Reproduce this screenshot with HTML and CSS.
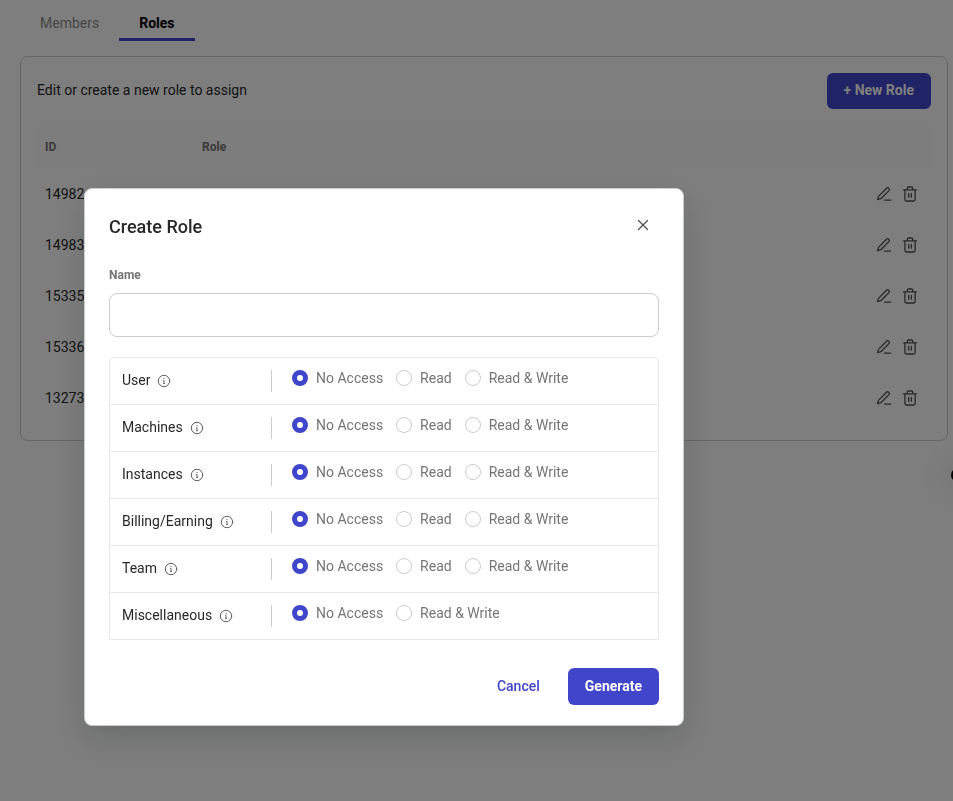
FILE: index.html
```html
<!DOCTYPE html>
<html lang="en">
<head>
  <meta charset="UTF-8" />
  <meta name="viewport" content="width=device-width, initial-scale=1.0" />
  <title>Roles</title>
  <link rel="stylesheet" href="styles.css">
</head>
<body>
  <!-- shared icons -->
  <svg class="sprite" aria-hidden="true">
    <symbol id="icon-edit" viewBox="0 0 16 16">
      <path d="M1.500 13.700l1-3.300 8-8.200a1.500 1.500 0 0 1 2.200 0l.2.2a1.500 1.500 0 0 1 0 2.200L4.900 12.700zM8.600 14.200h6" />
    </symbol>
    <symbol id="icon-trash" viewBox="0 0 16 16">
      <path d="M1.500 3.800h13M5.300 3.500V2.200C5.300 1.400 5.700 1 6.400 1h3.200c.7 0 1.100.4 1.100 1.200v1.300M2.900 3.800v9.700c0 1 .6 1.500 1.500 1.500h7.200c.9 0 1.500-.5 1.500-1.500V3.800M6.700 7.500v3.700M9.300 7.500v3.700" />
    </symbol>
    <symbol id="icon-info" viewBox="0 0 14 14">
      <circle cx="7" cy="7" r="5.700" />
      <path d="M6.600 6.500H7v3M6.600 9.600h.9M7 4.400v.4" />
    </symbol>
  </svg>

  <main class="page">
    <nav class="tabs">
      <a class="tab" href="#members">Members</a>
      <a class="tab active" href="#roles">Roles</a>
    </nav>

    <section class="card">
      <div class="card-header">
        <p>Edit or create a new role to assign</p>
        <button class="btn" type="button">+ New Role</button>
      </div>
      <table class="roles">
        <thead>
          <tr><th class="col-id">ID</th><th>Role</th><th></th></tr>
        </thead>
        <tbody>
          <tr>
            <td>14982</td><td></td>
            <td><div class="actions">
              <button type="button" aria-label="Edit"><svg><use href="#icon-edit" /></svg></button>
              <button type="button" aria-label="Delete"><svg><use href="#icon-trash" /></svg></button>
            </div></td>
          </tr>
          <tr>
            <td>14983</td><td></td>
            <td><div class="actions">
              <button type="button" aria-label="Edit"><svg><use href="#icon-edit" /></svg></button>
              <button type="button" aria-label="Delete"><svg><use href="#icon-trash" /></svg></button>
            </div></td>
          </tr>
          <tr>
            <td>15335</td><td></td>
            <td><div class="actions">
              <button type="button" aria-label="Edit"><svg><use href="#icon-edit" /></svg></button>
              <button type="button" aria-label="Delete"><svg><use href="#icon-trash" /></svg></button>
            </div></td>
          </tr>
          <tr>
            <td>15336</td><td></td>
            <td><div class="actions">
              <button type="button" aria-label="Edit"><svg><use href="#icon-edit" /></svg></button>
              <button type="button" aria-label="Delete"><svg><use href="#icon-trash" /></svg></button>
            </div></td>
          </tr>
          <tr>
            <td>13273</td><td></td>
            <td><div class="actions">
              <button type="button" aria-label="Edit"><svg><use href="#icon-edit" /></svg></button>
              <button type="button" aria-label="Delete"><svg><use href="#icon-trash" /></svg></button>
            </div></td>
          </tr>
        </tbody>
      </table>
    </section>
  </main>

  <div class="side-handle"></div>

  <div class="overlay">
    <form class="modal" role="dialog" aria-labelledby="modalTitle">
      <div class="modal-header">
        <h2 id="modalTitle">Create Role</h2>
        <button class="close" type="button" aria-label="Close">
          <svg viewBox="0 0 12 12"><path d="M1.500 1.500l9 9M10.500 1.500l-9 9" /></svg>
        </button>
      </div>

      <label class="field-label" for="roleName">Name</label>
      <input class="field" type="text" id="roleName">

      <div class="permissions">
        <div class="permission" role="radiogroup" aria-labelledby="permUser">
          <div class="permission-name"><span id="permUser">User</span><svg><use href="#icon-info" /></svg></div>
          <div class="options">
            <label><input type="radio" name="user" checked>No Access</label>
            <label><input type="radio" name="user">Read</label>
            <label><input type="radio" name="user">Read &amp; Write</label>
          </div>
        </div>
        <div class="permission" role="radiogroup" aria-labelledby="permMachines">
          <div class="permission-name"><span id="permMachines">Machines</span><svg><use href="#icon-info" /></svg></div>
          <div class="options">
            <label><input type="radio" name="machines" checked>No Access</label>
            <label><input type="radio" name="machines">Read</label>
            <label><input type="radio" name="machines">Read &amp; Write</label>
          </div>
        </div>
        <div class="permission" role="radiogroup" aria-labelledby="permInstances">
          <div class="permission-name"><span id="permInstances">Instances</span><svg><use href="#icon-info" /></svg></div>
          <div class="options">
            <label><input type="radio" name="instances" checked>No Access</label>
            <label><input type="radio" name="instances">Read</label>
            <label><input type="radio" name="instances">Read &amp; Write</label>
          </div>
        </div>
        <div class="permission" role="radiogroup" aria-labelledby="permBilling">
          <div class="permission-name"><span id="permBilling">Billing/Earning</span><svg><use href="#icon-info" /></svg></div>
          <div class="options">
            <label><input type="radio" name="billing" checked>No Access</label>
            <label><input type="radio" name="billing">Read</label>
            <label><input type="radio" name="billing">Read &amp; Write</label>
          </div>
        </div>
        <div class="permission" role="radiogroup" aria-labelledby="permTeam">
          <div class="permission-name"><span id="permTeam">Team</span><svg><use href="#icon-info" /></svg></div>
          <div class="options">
            <label><input type="radio" name="team" checked>No Access</label>
            <label><input type="radio" name="team">Read</label>
            <label><input type="radio" name="team">Read &amp; Write</label>
          </div>
        </div>
        <div class="permission" role="radiogroup" aria-labelledby="permMisc">
          <div class="permission-name"><span id="permMisc">Miscellaneous</span><svg><use href="#icon-info" /></svg></div>
          <div class="options">
            <label><input type="radio" name="misc" checked>No Access</label>
            <label><input type="radio" name="misc">Read &amp; Write</label>
          </div>
        </div>
      </div>

      <div class="modal-footer">
        <button class="btn-text" type="button">Cancel</button>
        <button class="btn" type="submit">Generate</button>
      </div>
    </form>
  </div>
</body>
</html>
```

FILE: styles.css
```css
* {
  box-sizing: border-box;
}
body {
  margin: 0;
  font-family: Roboto, "Liberation Sans", sans-serif;
  font-size: 14px;
  line-height: 20px;
  color: #282828;
  background: #fcfcfc;
  overflow: hidden;
}
button, input {
  font: inherit;
}
button {
  padding: 0;
  border: 0;
  background: none;
  cursor: pointer;
}
svg {
  display: block;
  fill: none;
  stroke: currentColor;
  stroke-linecap: round;
  stroke-linejoin: round;
}
.sprite {
  position: absolute;
  width: 0;
  height: 0;
}
.page {
  padding: 0 5px 20px 20px;
}

/* tabs */
.tabs {
  display: flex;
}
.tab {
  padding: 13px 20px 5px;
  border-bottom: 3px solid transparent;
  color: #8c8c8c;
  text-decoration: none;
}
.tab.active {
  border-color: #4046ca;
  color: #000;
  font-weight: 700;
}

/* roles card */
.card {
  margin-top: 15px;
  padding: 16px;
  border: 1px solid #ccc;
  border-radius: 8px;
}
.card-header {
  display: flex;
  justify-content: space-between;
  align-items: center;
  margin-bottom: 16px;
}
.card-header p {
  margin: 0;
  padding-bottom: 2px;
}
.btn {
  height: 36px;
  padding: 0 17px 2px;
  border-radius: 6px;
  background: #4046ca;
  color: #fff;
  font-weight: 700;
}
.roles {
  width: 100%;
  border-collapse: collapse;
}
.roles th {
  height: 44px;
  padding: 0 8px;
  background: #fafafa;
  color: #757575;
  font-size: 12px;
  font-weight: 700;
  text-align: left;
}
.roles .col-id {
  width: 157px;
}
.roles td {
  height: 51px;
  padding: 0 8px 2px;
}
.actions {
  display: flex;
  justify-content: flex-end;
  gap: 10px;
  padding-right: 5px;
}
.actions button {
  color: #505050;
}
.actions svg {
  width: 16px;
  height: 16px;
  stroke-width: 1.3;
}

.side-handle {
  position: fixed;
  top: 468px;
  right: -12px;
  width: 14px;
  height: 14px;
  border-radius: 50%;
  background: #000;
  box-shadow: 0 0 32px 12px rgba(0, 0, 0, 0.08);
}

/* modal */
.overlay {
  position: fixed;
  inset: 0;
  padding: 188px 0 0 84px;
  background: rgba(0, 0, 0, 0.5);
}
.modal {
  width: 600px;
  padding: 24px 24px 20px;
  border: 1px solid #ccc;
  border-radius: 8px;
  background: #fff;
  box-shadow: 0 12px 32px rgba(0, 20, 20, 0.16);
}
.modal-header {
  display: flex;
  justify-content: space-between;
  align-items: center;
  margin-bottom: 24px;
}
.modal-header h2 {
  margin: 0;
  font-size: 18px;
  font-weight: 500;
  line-height: 28px;
}
.close {
  padding: 8px 10px 12px;
  margin: -4px 0;
  color: #505050;
}
.close svg {
  width: 12px;
  height: 12px;
  stroke-width: 1.3;
}
.field-label {
  display: block;
  margin-bottom: 8px;
  color: #757575;
  font-size: 12px;
  font-weight: 700;
}
.field {
  display: block;
  width: 100%;
  height: 44px;
  margin-bottom: 20px;
  padding: 0 12px;
  border: 1px solid #ccc;
  border-radius: 8px;
  background: #fff;
  outline: none;
}
.permissions {
  border: 1px solid #e6e6e6;
  border-radius: 4px 4px 0 0;
}
.permission {
  display: grid;
  grid-template-columns: 150px 1fr;
  gap: 20px;
  padding: 12px;
}
.permission + .permission {
  border-top: 1px solid #e6e6e6;
}
.permission-name {
  display: flex;
  align-items: center;
  gap: 7px;
  height: 22px;
  border-right: 1px solid #ccc;
}
.permission-name span {
  padding-bottom: 2px;
}
.permission-name svg {
  width: 14px;
  height: 14px;
  color: #606060;
}
.options {
  display: flex;
  align-items: flex-start;
  gap: 13px;
  color: #757575;
  line-height: 16px;
}
.options label {
  display: flex;
  gap: 8px;
}
.options input {
  appearance: none;
  width: 16px;
  height: 16px;
  margin: 0;
  border: 1px solid #ccc;
  border-radius: 50%;
  background: #fff;
}
.options input:checked {
  border: 5px solid #4046ca;
}
.modal-footer {
  display: flex;
  justify-content: flex-end;
  gap: 28px;
  margin-top: 28px;
}
.modal-footer .btn {
  height: 37px;
}
.btn-text {
  padding-bottom: 2px;
  color: #4046ca;
  font-weight: 500;
}
```
